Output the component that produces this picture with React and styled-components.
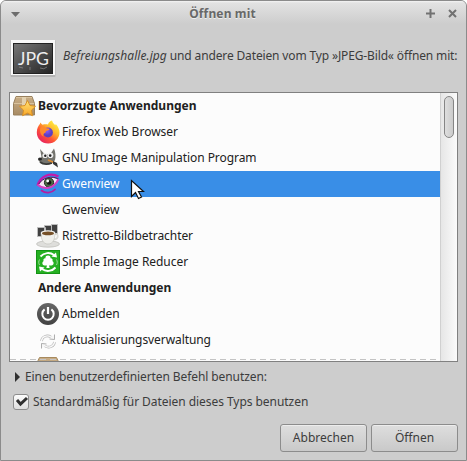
import React from 'react';
import styled, { createGlobalStyle } from 'styled-components';

const Global = createGlobalStyle`
  * { box-sizing: border-box; }
  html, body { margin: 0; background: #fff; overflow: hidden; }
`;

const Dialog = styled.main`
  width: 467px;
  height: 461px;
  display: flex;
  flex-direction: column;
  border: 1px solid #8b8b8b;
  border-radius: 6px 6px 0 0;
  background: #cdcdcd;
  color: #3c3c3c;
  font: 12px/16px "Noto Sans", "Open Sans", sans-serif;
  overflow: hidden;
  white-space: nowrap;
`;

const TitleBar = styled.header`
  height: 25px;
  flex: none;
  display: flex;
  align-items: center;
  padding: 0 9px 0 10px;
  background: linear-gradient(#f4f4f4 0, #e2e2e2 2px, #cdcdcd 23px);
`;

const Title = styled.h1`
  flex: 1;
  margin: 0;
  padding-right: 1px;
  text-align: center;
  font-size: 12px;
  line-height: 24px;
  letter-spacing: 0.15px;
  color: #686868;
  text-shadow: 0 1px #eee;
`;

const WindowControls = styled.div`
  display: flex;
  gap: 13px;
`;

const Intro = styled.section`
  height: 66px;
  flex: none;
  display: flex;
  align-items: center;
  padding: 0 0 2px 9px;
`;

const IntroText = styled.p`
  margin: -5px 0 0 7px;
  letter-spacing: -0.14px;
`;

const FileName = styled.i`
  letter-spacing: 0.06px;
`;

const ListFrame = styled.section`
  height: 270px;
  flex: none;
  display: flex;
  margin: 0 8px;
  border: 1px solid #808080;
  background: #fcfcfc;
  overflow: hidden;
`;

const List = styled.div`
  flex: 1;
  height: 268px;
  overflow: hidden;
  position: relative;
`;

const Row = styled.div`
  height: 26px;
  display: flex;
  align-items: center;
  padding-left: ${(p) => (p.$group ? 2 : 26)}px;
  background: ${(p) => (p.$selected ? '#398ee7' : 'transparent')};
  color: ${(p) => (p.$selected ? '#fff' : '#212121')};
  font-weight: ${(p) => (p.$group ? 700 : 400)};

  &:nth-of-type(11) > span:last-child { padding-top: 2px; }
`;

const IconSlot = styled.span`
  width: 26px;
  height: 24px;
  flex: none;
  svg { display: block; }
`;

const Label = styled.span`
  letter-spacing: ${(p) => p.$spacing || 0}px;
`;

const CutLine = styled.div`
  position: absolute;
  left: 0;
  right: 0;
  bottom: 1px;
  height: 1px;
  background: repeating-linear-gradient(90deg, #c4c4c4 0 6px, transparent 6px 10px);
`;

const ScrollTrack = styled.div`
  width: 17px;
  padding: 3px 0 0 3px;
  border-left: 1px solid #d0d0d0;
  background: linear-gradient(90deg, #e6e6e6, #fbfbfb);
`;

const ScrollThumb = styled.div`
  width: 10px;
  height: 42px;
  border: 1px solid #858585;
  border-radius: 5px;
  background: linear-gradient(90deg, #dedede, #cbcbcb);
`;

const Expander = styled.div`
  display: flex;
  align-items: center;
  gap: 4px;
  height: 26px;
  flex: none;
  margin-top: 2px;
  padding-left: 14px;
`;

const CheckRow = styled.div`
  display: flex;
  align-items: center;
  gap: 4px;
  height: 24px;
  padding-left: 12px;
`;

const CheckBox = styled.span`
  width: 16px;
  height: 16px;
  border: 1px solid #8d8d8d;
  border-radius: 3px;
  background: linear-gradient(#fcfcfc, #dedede);
  svg { display: block; margin: -1px 0 0 0; overflow: visible; }
`;

const Actions = styled.footer`
  display: flex;
  justify-content: flex-end;
  gap: 4px;
  margin: 10px 8px 0 0;
`;

const Button = styled.button`
  width: 87px;
  height: 28px;
  padding: 0 0 1px;
  border: 1px solid #8c8c8c;
  border-radius: 3px;
  background: linear-gradient(#dedede, #c9c9c9);
  box-shadow: inset 0 1px #ededed;
  color: #3c3c3c;
  font: inherit;
`;

const Pointer = styled.svg`
  position: absolute;
  left: 130px;
  top: 179px;
`;

const JpgIcon = () => (
  <svg width="46" height="38" viewBox="0 0 46 38">
    <defs>
      <linearGradient id="jpg" x1="0" y1="0" x2="1" y2="1">
        <stop stopColor="#777" /><stop offset="1" stopColor="#242424" />
      </linearGradient>
    </defs>
    <rect x=".5" y="1" width="45" height="37" rx="1" fill="#b5b5b5" />
    <rect x="1" y="1" width="44" height="35" fill="#f8f8f8" />
    <rect x="3.500" y="4.500" width="39" height="30" fill="url(#jpg)" stroke="#222" />
    <text x="8" y="26" fontFamily="Lato" fontSize="17" textLength="31" lengthAdjust="spacingAndGlyphs" fill="#eee">JPG</text>
    <path d="M9 28l4 1M20 28v3M30 29q4 2 7-1" fill="none" stroke="#aaa" opacity=".5" />
  </svg>
);

const PackageIcon = ({ star }) => (
  <svg width="24" height="24" viewBox="0 0 24 24">
    <defs>
      <linearGradient id="box" x2="0" y2="1"><stop stopColor="#c9ae87" /><stop offset="1" stopColor="#a88b64" /></linearGradient>
      <linearGradient id="star" x2="0" y2="1"><stop stopColor="#ffe477" /><stop offset="1" stopColor="#f8a526" /></linearGradient>
    </defs>
    {star ? (
      <>
        <path d="M4 2.500h16l2.500 7v11.500h-21V9.500z" fill="url(#box)" stroke="#98805d" />
        <path d="M2 9.500h20M4 3.500h16" stroke="#d9c29d" />
        <path d="M10 3h4v9h-4z" fill="#e2d1b0" />
        <path d="M15.500 6.500l2.500 5 5.500.8-4 3.900.9 5.500-4.900-2.600-4.900 2.600.9-5.500-4-3.900 5.500-.8z" fill="url(#star)" stroke="#d99023" strokeLinejoin="round" />
      </>
    ) : (
      <>
        <path d="M3.500 3.500h17l1.500 3V22H2V6.500z" fill="url(#box)" stroke="#a78a5f" />
        <path d="M5 5.500h4M14 5.500h5" stroke="#94764c" />
      </>
    )}
  </svg>
);

const FirefoxIcon = () => (
  <svg width="24" height="24" viewBox="0 0 24 24">
    <defs>
      <linearGradient id="fox" x1=".85" y1=".1" x2=".2" y2=".9">
        <stop stopColor="#fff044" /><stop offset=".35" stopColor="#ffb52a" /><stop offset=".65" stopColor="#ff5634" /><stop offset="1" stopColor="#e9265c" />
      </linearGradient>
      <radialGradient id="globe" cx=".4" cy=".3">
        <stop stopColor="#9059ff" /><stop offset="1" stopColor="#5b3fc0" />
      </radialGradient>
    </defs>
    <path d="M16 .5c.6 2 2 3.500 3.300 4.800l.5-1.300c2.400 2.600 3.700 5.600 3.700 8.600 0 6.200-5 11-11.300 11S.8 18.800.8 12.600c0-4 1.500-6.600 3.200-8.800V2.500l2.500 2.300C8.500 4 10.500 4.200 12 4.500 12.500 2.500 14 1 16 .5z" fill="url(#fox)" />
    <circle cx="12" cy="12.500" r="4.900" fill="url(#globe)" />
    <path d="M4.500 7.500C7 6 9.500 6.700 10.500 8.300l3 .5c0 1.300-1.500 1.800-3.200 2.200-.6.400-.8.900-.6 1.600-2.200.8-3 2.400-2 4.200-3-1.600-4.500-5.300-3.200-9.300z" fill="#ff8a2b" />
  </svg>
);

const GimpIcon = () => (
  <svg width="24" height="24" viewBox="0 0 24 24">
    <path d="M4 3l4 4.500c2.500 1 5 1 7-.5L18 2.500c1.500 3.500 2 8 1 11.500-2 4.500-8 5.500-12 3.800-3-1-4.500-3-4.500-3.800L5.500 11z" fill="#74746e" />
    <path d="M4 16c3 2.500 8 2.500 12 1" stroke="#3b3b38" strokeWidth="1.800" fill="none" />
    <circle cx="9" cy="9.500" r="2.600" fill="#eee" /><circle cx="14.500" cy="9.300" r="2.800" fill="#eee" />
    <circle cx="9.300" cy="9.800" r="1.200" fill="#222" /><circle cx="14.200" cy="9.600" r="1.300" fill="#222" />
    <ellipse cx="4" cy="13" rx="2" ry="1.500" fill="#262626" />
    <path d="M12 14l6 2.500" stroke="#de8c31" strokeWidth="1.800" />
    <path d="M17 15l4 2 1 4.500-5-3.500z" fill="#353535" />
  </svg>
);

const EyeIcon = () => (
  <svg width="24" height="24" viewBox="0 0 24 24">
    <path d="M2.500 13C6 5.500 15 3.500 22 8c-3 8-13 10-19.500 5z" fill="#f6e6f3" />
    <circle cx="13" cy="10.500" r="4.600" fill="#4d6a45" stroke="#1f2d20" />
    <circle cx="13" cy="10.500" r="2.300" fill="#111" /><circle cx="11.700" cy="9" r="1.400" fill="#fff" />
    <path d="M1.500 13.500C4.500 4 14 0 22.500 4.500" fill="none" stroke="#c21aaa" strokeWidth="2.400" />
    <path d="M2 13C7 5 16 3.500 22.500 7" fill="none" stroke="#5e0f55" strokeWidth="1" />
    <path d="M1.500 12.500C8 18.500 18 17 22.500 7" fill="none" stroke="#d53ec1" strokeWidth="1.900" />
    <path d="M5.500 18.500c4 3.200 10 2.800 13.500-1" fill="none" stroke="#b51ca0" strokeWidth="1.800" strokeLinecap="round" />
  </svg>
);

const CoffeeIcon = () => (
  <svg width="24" height="24" viewBox="0 0 24 24">
    <path d="M1.500 3.500h8v9h-8zM8.500 1.500h7v8h-7zM15.500.5h6v9h-6z" fill="#414141" stroke="#bdbdbd" />
    <ellipse cx="12" cy="20" rx="11.500" ry="3.200" fill="#dededb" stroke="#b4b4af" strokeWidth=".6" />
    <path d="M18 10.500c5-2 5 4 0 5" fill="none" stroke="#dcdcd7" strokeWidth="1.800" />
    <path d="M5 8.500h14c0 7-2 11.500-7 11.500S5 15.500 5 8.500z" fill="#efefeb" stroke="#b7b7b1" strokeWidth=".5" />
    <ellipse cx="12" cy="9" rx="7.200" ry="2.700" fill="#f3f3f0" /><ellipse cx="12" cy="9.400" rx="6" ry="1.900" fill="#765027" />
  </svg>
);

const ReducerIcon = () => (
  <svg width="24" height="24" viewBox="0 0 24 24">
    <rect x=".5" y=".5" width="23" height="23" fill="#25b022" stroke="#159316" />
    <path d="M12 5.500c1.800 0 2.800 1.300 2.500 2.700 1.900-.1 2.700 1.600 1.800 2.900 1.900.8 1.800 4.400-.8 4.400H13l.7 2.500h-3.400l.7-2.500H8.500c-2.600 0-2.700-3.600-.8-4.400-.9-1.300-.1-3 1.800-2.900C9.200 6.800 10.200 5.500 12 5.500z" fill="#fff" />
    <path d="M4.500 6.500C8 2.500 14 2 18 5M19.500 17.500c-3.500 4-9.500 4.500-13.500 1.500" fill="none" stroke="#fff" strokeWidth="1.900" />
    <path d="M15.500 6.500l5.500 1-1-5zM8.500 17.500l-5.500-1 1 5z" fill="#fff" />
    <path d="M3.500 9.500c-1 2-1 3.500 0 5.500M20.500 9.500c1 2 1 3.500 0 5.500" stroke="#9edb99" fill="none" />
  </svg>
);

const PowerIcon = () => (
  <svg width="24" height="24" viewBox="0 0 24 24">
    <defs><linearGradient id="power" x2="0" y2="1"><stop stopColor="#666" /><stop offset="1" stopColor="#424242" /></linearGradient></defs>
    <circle cx="12" cy="12" r="11" fill="url(#power)" />
    <path d="M8.600 7.400a5.700 5.700 0 1 0 6.800 0" fill="none" stroke="#fff" strokeWidth="2" />
    <path d="M12 5v7" stroke="#fff" strokeWidth="2.200" />
  </svg>
);

const RefreshIcon = () => (
  <svg width="24" height="24" viewBox="0 0 24 24">
    <path d="M5.500 13C6 8.500 11 6.500 15 9M18.500 14C18 18.500 13 20.500 9 18" fill="none" stroke="#b4b4b4" strokeWidth="2.600" />
    <path d="M5.500 13C6 8.500 11 6.500 15 9M18.500 14C18 18.500 13 20.500 9 18" fill="none" stroke="#fafafa" strokeWidth="1.400" />
    <path d="M18.500 6.500v5l-5-.5M5.500 20.500v-5l5 .5" fill="#f6f6f6" stroke="#999" strokeWidth=".8" />
  </svg>
);

const rows = [
  { label: 'Bevorzugte Anwendungen', group: true, icon: <PackageIcon star /> },
  { label: 'Firefox Web Browser', icon: <FirefoxIcon /> },
  { label: 'GNU Image Manipulation Program', icon: <GimpIcon />, spacing: -0.06 },
  { label: 'Gwenview', icon: <EyeIcon />, selected: true },
  { label: 'Gwenview' },
  { label: 'Ristretto-Bildbetrachter', icon: <CoffeeIcon />, spacing: -0.06 },
  { label: 'Simple Image Reducer', icon: <ReducerIcon />, spacing: -0.05 },
  { label: 'Andere Anwendungen', group: true },
  { label: 'Abmelden', icon: <PowerIcon /> },
  { label: 'Aktualisierungsverwaltung', icon: <RefreshIcon />, spacing: -0.08 },
  { label: 'Anwendungen und Profile', icon: <PackageIcon /> },
];

export default function App() {
  return (
    <>
      <Global />
      <Dialog>
        <TitleBar>
          <svg width="9" height="6"><path d="M0 1h9L4.500 6z" fill="#6d6d6d" /></svg>
          <Title>Öffnen mit</Title>
          <WindowControls>
            <svg width="9" height="9"><path d="M4.500 0v9M0 4.500h9" stroke="#727272" strokeWidth="2" /></svg>
            <svg width="9" height="9"><path d="M1 1l7 7M8 1L1 8" stroke="#727272" strokeWidth="2" /></svg>
          </WindowControls>
        </TitleBar>
        <Intro>
          <JpgIcon />
          <IntroText><FileName>Befreiungshalle.jpg</FileName> und andere Dateien vom Typ »JPEG-Bild« öffnen mit:</IntroText>
        </Intro>
        <ListFrame>
          <List>
            {rows.map((r, i) => (
              <Row key={i} $group={r.group} $selected={r.selected}>
                <IconSlot>{r.icon}</IconSlot>
                <Label $spacing={r.spacing}>{r.label}</Label>
              </Row>
            ))}
            <CutLine />
          </List>
          <ScrollTrack><ScrollThumb /></ScrollTrack>
        </ListFrame>
        <Expander>
          <svg width="6" height="10"><path d="M0 0l5 5-5 5z" fill="#303030" /></svg>
          <Label $spacing={-0.09}>Einen benutzerdefinierten Befehl benutzen:</Label>
        </Expander>
        <CheckRow>
          <CheckBox><svg width="14" height="14"><path d="M3 6l3.500 4L13 4" fill="none" stroke="#303030" strokeWidth="3" /></svg></CheckBox>
          <Label $spacing={-0.05}>Standardmäßig für Dateien dieses Typs benutzen</Label>
        </CheckRow>
        <Actions>
          <Button>Abbrechen</Button>
          <Button>Öffnen</Button>
        </Actions>
        <Pointer width="15" height="22"><path d="M1.500 1.500v16l4-4 3 6 3-1.500-3-5.500h5z" fill="#fff" stroke="#111" strokeWidth="1.200" /></Pointer>
      </Dialog>
    </>
  );
}
